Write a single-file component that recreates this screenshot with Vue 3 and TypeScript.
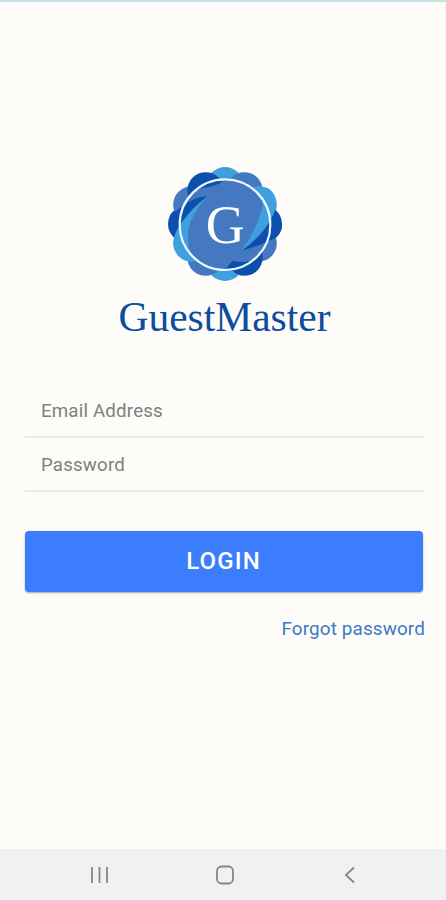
<script setup lang="ts">
import { ref } from 'vue'

interface Petal { x: number; y: number; fill: string }

const email = ref('')
const password = ref('')

const light = '#40a0df'
const medium = '#4479c2'
const dark = '#0c50ac'
const order: string[] = [light, medium, light, dark, medium, dark, light, medium, light, dark, medium, dark]
const petals: Petal[] = order.map((fill, i) => {
  const angle = (i * Math.PI) / 6
  return { x: 212 + 116 * Math.sin(angle), y: 206 - 116 * Math.cos(angle), fill }
})
</script>

<template>
  <main class="screen">
    <header class="brand">
      <svg class="emblem" viewBox="38 32 348 348" aria-hidden="true">
        <circle v-for="(p, i) in petals" :key="i" :cx="p.x" :cy="p.y" r="55" :fill="p.fill" />
        <circle cx="212" cy="206" r="136" fill="#4479c2" />
        <path d="M104 92 Q120 58 158 57 L206 78 Q180 96 140 98 L116 108Z" fill="#0c50ac" />
        <path d="M47 179 Q70 165 88 150 Q118 126 160 122 Q102 167 68 234 Q44 222 47 179Z" fill="#0c50ac" />
        <path d="M160 122 Q112 174 102 222 Q97 264 110 301 Q70 307 59 276 Q55 248 67 225 Q101 166 160 122Z" fill="#40a0df" />
        <path d="M324 96 Q354 94 365 133 Q368 164 350 190 Q322 240 262 285 Q302 232 322 165 Q330 130 324 96Z" fill="#40a0df" />
        <path d="M364 166 Q386 193 382 222 Q373 248 350 254 Q320 270 262 286 Q330 241 364 166Z" fill="#0c50ac" />
        <path d="M216 338 L235 316 Q286 326 325 308 Q313 350 287 356 Q252 365 235 346Z" fill="#0c50ac" />
        <circle cx="212" cy="208" r="136" fill="none" stroke="#edf8fd" stroke-width="6.5" />
        <text x="213" y="262" class="monogram">G</text>
      </svg>
      <h1 class="wordmark">GuestMaster</h1>
    </header>

    <form class="login" @submit.prevent>
      <input v-model="email" class="field" type="email" placeholder="Email Address" aria-label="Email Address" />
      <input v-model="password" class="field" type="password" placeholder="Password" aria-label="Password" />
      <button class="submit" type="submit">LOGIN</button>
      <a class="forgot" href="#">Forgot password</a>
    </form>

    <nav class="system-bar">
      <svg viewBox="0 0 24 24"><path d="M4 4V20M11.5 4V20M19 4V20" /></svg>
      <svg viewBox="0 0 24 24"><rect x="4" y="3.5" width="16" height="17" rx="4.5" /></svg>
      <svg viewBox="0 0 24 24"><path d="M16 4.5L8 12L16 19.5" /></svg>
    </nav>
  </main>
</template>

<style>
body { margin: 0; background: #fdfcf8; }
</style>

<style scoped>
.screen {
  box-sizing: border-box;
  display: flex;
  flex-direction: column;
  height: 900px;
  border-top: 2px solid #c9e0e5;
  background: #fdfcf8;
  font-family: Roboto, sans-serif;
}
.brand {
  display: flex;
  flex-direction: column;
  align-items: center;
  padding-top: 164px;
  padding-left: 3px;
}
.emblem { width: 116px; height: 116px; }
.monogram {
  font-family: "Liberation Serif", serif;
  font-size: 162px;
  fill: #fff;
  text-anchor: middle;
}
.wordmark {
  margin: 11px 0 1px;
  color: #0d4c9e;
  font: 400 41.5px/48px "Liberation Serif", serif;
}
.login {
  display: flex;
  flex-direction: column;
  padding: 42px 21px 0 25px;
}
.field {
  box-sizing: border-box;
  width: 100%;
  height: 54px;
  padding: 2px 16px 0;
  border: 0;
  border-bottom: 2px solid #ebeae7;
  border-radius: 0;
  outline: 0;
  background: transparent;
  color: #555;
  font: 400 18.7px/24px Roboto, sans-serif;
  letter-spacing: .18px;
}
.field::placeholder { color: #80807e; opacity: 1; }
.submit {
  height: 61px;
  margin: 39px 2px 0 0;
  padding: 0 1px 2px 0;
  border: 0;
  border-radius: 4px;
  background: #3b7dfc;
  box-shadow: 0 1px 2px #626c8099;
  color: #fff;
  font: 500 24px/58px Roboto, sans-serif;
  letter-spacing: 1.15px;
}
.forgot {
  align-self: flex-end;
  margin-top: 25px;
  color: #3b7bc6;
  font-size: 18.9px;
  line-height: 24px;
  letter-spacing: .12px;
  text-decoration: none;
}
.system-bar {
  display: flex;
  justify-content: space-between;
  align-items: center;
  height: 51px;
  margin-top: auto;
  padding: 0 84px 0 88px;
  background: #f1f1f1;
}
.system-bar svg {
  width: 24px;
  height: 24px;
  fill: none;
  stroke: #858585;
  stroke-width: 1.8;
}
</style>
